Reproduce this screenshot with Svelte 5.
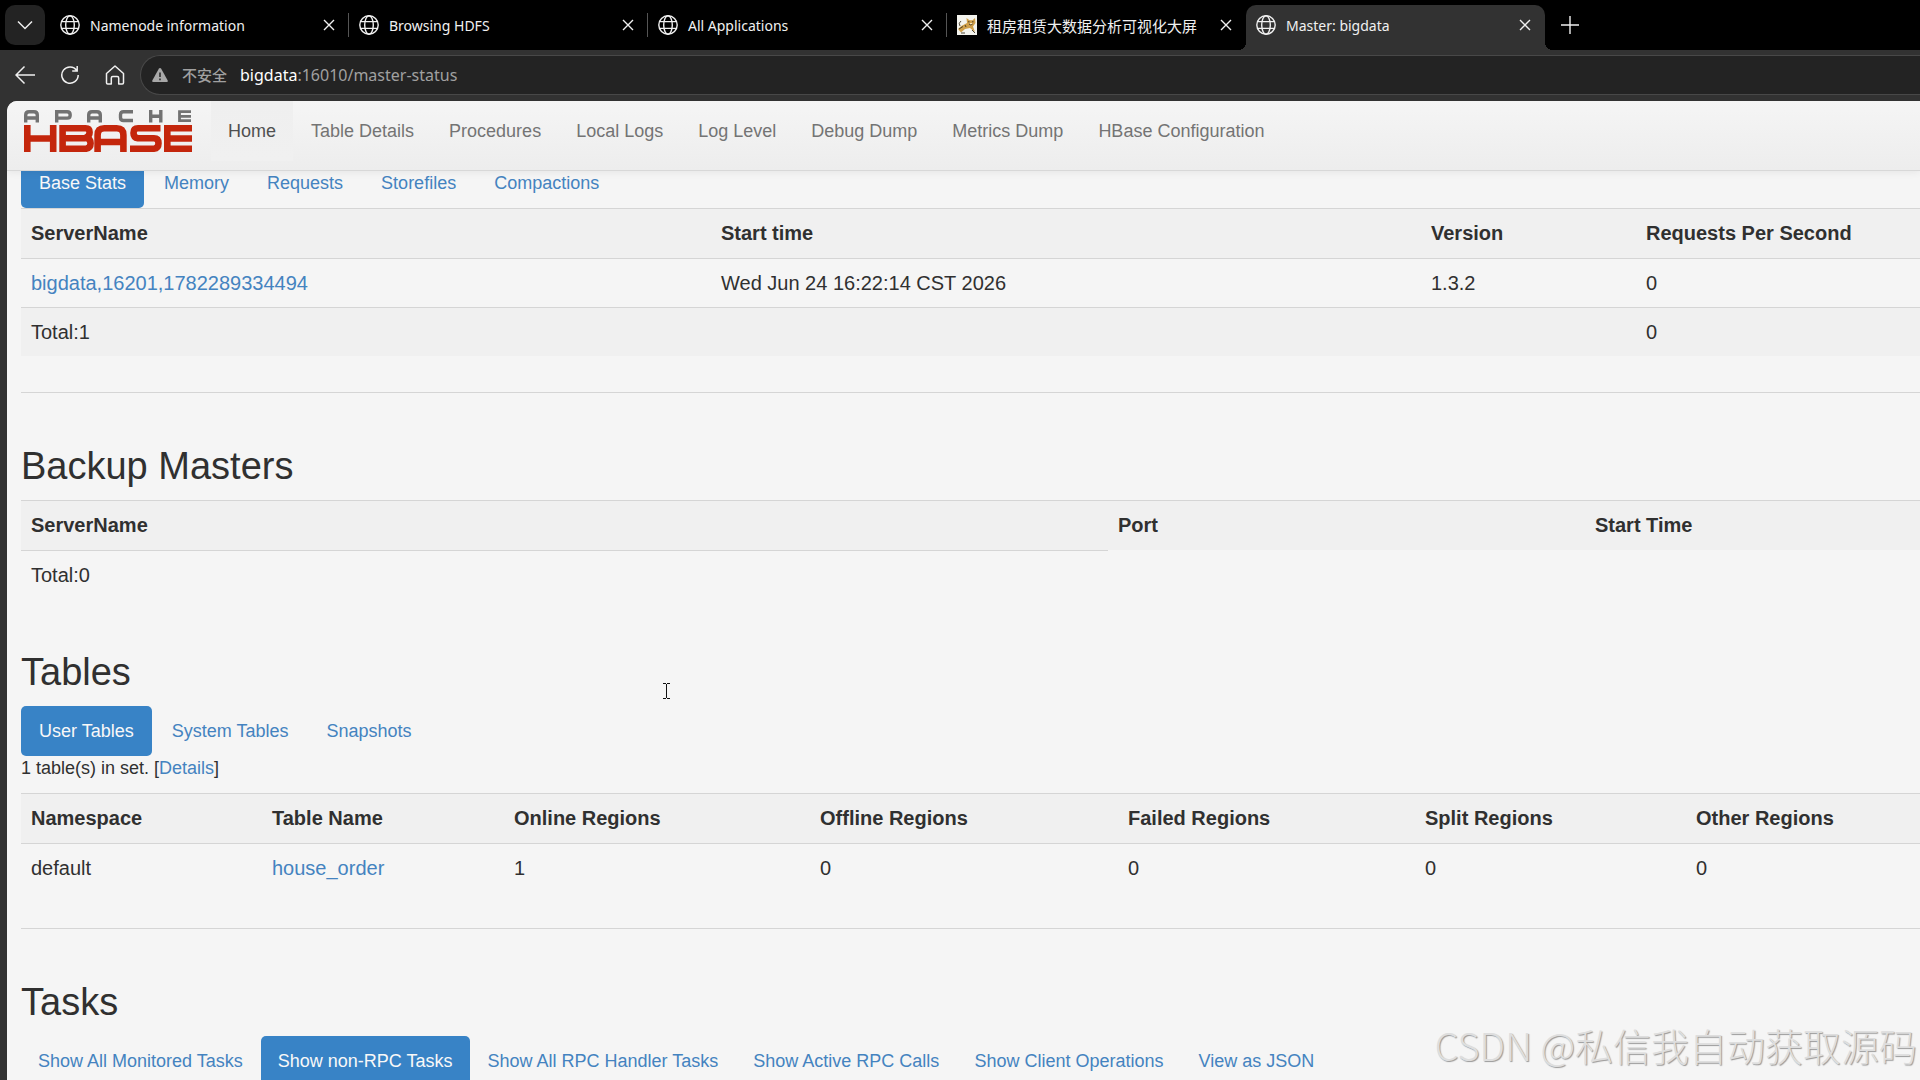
<script>
  const BROWSER_TABS = [
    { title: 'Namenode information', icon: 'globe' },
    { title: 'Browsing HDFS', icon: 'globe' },
    { title: 'All Applications', icon: 'globe' },
    { title: '租房租赁大数据分析可视化大屏', icon: 'tomcat', lang: 'zh' },
    { title: 'Master: bigdata', icon: 'globe' }
  ];
  let activeTab = $state(4);

  const NAV_LINKS = [
    'Home', 'Table Details', 'Procedures', 'Local Logs', 'Log Level',
    'Debug Dump', 'Metrics Dump', 'HBase Configuration'
  ];

  const STAT_TABS = ['Base Stats', 'Memory', 'Requests', 'Storefiles', 'Compactions'];
  const TABLE_TABS = ['User Tables', 'System Tables', 'Snapshots'];
  const TASK_TABS = [
    'Show All Monitored Tasks', 'Show non-RPC Tasks', 'Show All RPC Handler Tasks',
    'Show Active RPC Calls', 'Show Client Operations', 'View as JSON'
  ];

  // Relative column widths of the three tables
  const SERVER_COLS = [690, 710, 215, 284];
  const BACKUP_COLS = [1087, 477, 335];
  const TABLE_COLS = [241, 242, 306, 308, 297, 271, 234];

  const TABLE_HEADS = [
    'Namespace', 'Table Name', 'Online Regions', 'Offline Regions',
    'Failed Regions', 'Split Regions', 'Other Regions'
  ];

  let statTab = $state(0);
  let tableTab = $state(0);
  let taskTab = $state(1);
  const HOST = 'bigdata';
  const PATH = ':16010/master-status';

  function share(cols, i) {
    return (cols[i] / cols.reduce((a, b) => a + b, 0)) * 100;
  }
</script>

{#snippet cols(list)}
  <colgroup>
    {#each list as _, i}
      <col style:width="{share(list, i)}%" />
    {/each}
  </colgroup>
{/snippet}

{#snippet globe()}
  <svg class="favicon" viewBox="0 0 20 20" fill="none" stroke="currentColor" stroke-width="1.4" aria-hidden="true">
    <circle cx="10" cy="10" r="9.2" />
    <ellipse cx="10" cy="10" rx="4.3" ry="9.2" />
    <path d="M1.8 6.6h16.4M1.8 13.4h16.4" />
  </svg>
{/snippet}

<div class="window">
  <header class="tab-strip">
    <button class="tab-menu" aria-label="Tab actions">
      <svg viewBox="0 0 16 10" width="16" height="10" fill="none" stroke="currentColor" stroke-width="1.5"><path d="M1 1.5l7 7 7-7" /></svg>
    </button>
    {#each BROWSER_TABS as tab, i}
      <div class="browser-tab" class:active={i === activeTab} class:divided={i < activeTab - 1}>
        <button class="tab-label" onclick={() => (activeTab = i)}>
          {#if tab.icon === 'globe'}
            {@render globe()}
          {:else}
            <svg class="favicon" viewBox="0 0 20 20" aria-hidden="true">
              <path d="M0 0h20v20H0z" fill="#f4f4ee" />
              <path d="M1 14q4-4 9-6l-.5-5 3 2.200h3L18 3l.5 5-2.500 3.500 2 5.500-5-4-5 1-4 3.500z" fill="#d0a04a" />
              <path d="M3 11q-2-3 1-5M11 6.800h1.500M15 6.800h1.500M12 9l1.800 1 1.800-1M2 14l4-2.500M4 18h4M15 15l3 3M8 10l1 2" stroke="#3f3526" stroke-width=".9" fill="none" />
              <path d="M12.500 8h3l-1.500 1.500z" fill="#fff3d0" />
            </svg>
          {/if}
          <span lang={tab.lang}>{tab.title}</span>
        </button>
        <button class="tab-close" aria-label="Close {tab.title}">
          <svg viewBox="0 0 12 12" width="12" height="12" stroke="currentColor" stroke-width="1.4"><path d="M1 1l10 10M11 1L1 11" /></svg>
        </button>
      </div>
    {/each}
    <button class="new-tab" aria-label="New tab">
      <svg viewBox="0 0 18 18" width="18" height="18" stroke="currentColor" stroke-width="1.4"><path d="M9 0v18M0 9h18" /></svg>
    </button>
  </header>

  <div class="toolbar">
    <div class="tools">
      <button aria-label="Back">
        <svg viewBox="0 0 20 20" width="20" height="20" fill="none" stroke="currentColor" stroke-width="1.5"><path d="M20 10H1M9.500 1.500L1 10l8.500 8.500" /></svg>
      </button>
      <button aria-label="Refresh">
        <svg viewBox="0 0 20 20" width="20" height="20" fill="none" stroke="currentColor" stroke-width="1.5"><path d="M16.800 5.500A8.200 8.200 0 1 0 18.200 10M17.200 1v5h-5" /></svg>
      </button>
      <button aria-label="Home">
        <svg viewBox="0 0 20 20" width="20" height="20" fill="none" stroke="currentColor" stroke-width="1.5" stroke-linejoin="round"><path d="M1.500 8.500L10 1l8.500 7.500v9.300q0 1.200-1.200 1.200h-3.600v-6q0-1.500-1.500-1.500h-4.400q-1.500 0-1.500 1.500v6H2.700q-1.200 0-1.200-1.200z" /></svg>
      </button>
    </div>
    <div class="address">
      <svg viewBox="0 0 16 14" width="16" height="14" aria-hidden="true">
        <path d="M8 0q.8 0 1.200.7l6.500 11.800q.6 1.500-1 1.500H1.300q-1.600 0-1-1.500L6.800.7Q7.200 0 8 0z" fill="#a8a8a8" />
        <path d="M8 4.500v4.500M8 10.500v1.700" stroke="#232323" stroke-width="1.500" />
      </svg>
      <span class="insecure" lang="zh">不安全</span>
      <span class="url"><b>{HOST}</b>{PATH}</span>
    </div>
  </div>

  <div class="page">
    <nav class="navbar">
      <a class="brand" href="#top" aria-label="Apache HBase">
        <svg viewBox="0 0 168 42" width="168" height="42" fill="none">
          <g stroke="#727272" stroke-width="3.4">
            <path d="M1.700 12.500V5q0-3.300 3.300-3.300h5q3.300 0 3.300 3.300v7.500M1.700 8h11.600" />
            <path d="M32.700 12.500V1.700h10.500q3 0 3 3.200t-3 3.200H32.700" />
            <path d="M64.700 12.500V5q0-3.300 3.300-3.300h5q3.300 0 3.300 3.300v7.500M64.700 8h11.600" />
            <path d="M109 1.700H99.500q-3 0-3 3v2.800q0 3 3 3H109" />
            <path d="M126.700 0v12.500M136.800 0v12.500M126.700 6.300h10.100" />
            <path d="M167 1.700h-11.500v9h11.500M155.500 6.300h11.500" stroke-width="2.800" />
          </g>
          <g stroke="#c4260c" stroke-width="6.600">
            <path d="M3.300 15v27M29.200 15v27M3.300 28.500h26" />
            <path d="M38.600 18.300h23q4 0 4 4t-4 5.500q5 .8 5 5.500t-4.500 5.400H38.600zM38.600 28.300h23" />
            <path d="M73.600 42V25q0-6.700 6.700-6.700h12.400q6.700 0 6.700 6.700v17M73.600 32h26" />
            <path d="M136.500 18.300h-22.500q-4.500 0-4.500 4.600t4.500 5.400h16q4.500 0 4.500 5t-4.500 5.400h-24" />
            <path d="M168 18.300h-24.700v20.400H168M143 28.500h25" />
          </g>
        </svg>
      </a>
      <ul>
        {#each NAV_LINKS as link, i}
          <li><a href="#{link}" class:current={i === 0}>{link}</a></li>
        {/each}
      </ul>
    </nav>

    <main>
      <ul class="pills">
        {#each STAT_TABS as label, i}
          <li><a href="#{label}" class:selected={i === statTab} onclick={() => (statTab = i)}>{label}</a></li>
        {/each}
      </ul>
      <table>
        {@render cols(SERVER_COLS)}
        <tbody>
          <tr class="striped"><th>ServerName</th><th>Start time</th><th>Version</th><th>Requests Per Second</th></tr>
          <tr>
            <td><a href="#server">bigdata,16201,1782289334494</a></td>
            <td>Wed Jun 24 16:22:14 CST 2026</td>
            <td>1.3.2</td>
            <td>0</td>
          </tr>
          <tr class="striped"><td>Total:1</td><td></td><td></td><td>0</td></tr>
        </tbody>
      </table>
      <hr />

      <h2>Backup Masters</h2>
      <table>
        {@render cols(BACKUP_COLS)}
        <tbody>
          <tr class="striped"><th>ServerName</th><th>Port</th><th>Start Time</th></tr>
          <tr><td>Total:0</td></tr>
        </tbody>
      </table>

      <h2 class="after-table">Tables</h2>
      <ul class="pills">
        {#each TABLE_TABS as label, i}
          <li><a href="#{label}" class:selected={i === tableTab} onclick={() => (tableTab = i)}>{label}</a></li>
        {/each}
      </ul>
      <p>1 table(s) in set. [<a href="#details">Details</a>]</p>
      <table>
        {@render cols(TABLE_COLS)}
        <tbody>
          <tr class="striped">
            {#each TABLE_HEADS as head}
              <th>{head}</th>
            {/each}
          </tr>
          <tr>
            <td>default</td>
            <td><a href="#house_order">house_order</a></td>
            <td>1</td><td>0</td><td>0</td><td>0</td><td>0</td>
          </tr>
        </tbody>
      </table>
      <hr />

      <h2>Tasks</h2>
      <ul class="pills tight">
        {#each TASK_TABS as label, i}
          <li><a href="#{label}" class:selected={i === taskTab} onclick={() => (taskTab = i)}>{label}</a></li>
        {/each}
      </ul>
    </main>
  </div>

  <!-- mouse pointer and watermark lie over the page -->
  <svg class="pointer" viewBox="0 0 8 17" width="8" height="17" stroke="#111" fill="none" aria-hidden="true">
    <path d="M0 .5h3M4 .5h3M0 15.500h3M4 15.500h3M3.500 1v14" />
  </svg>
  <div class="watermark">CSDN @私信我自动获取源码</div>
</div>

<style>
  :global(body) {
    background: #323232;
  }

  .window {
    position: relative;
    display: flex;
    flex-direction: column;
    height: 100vh;
    overflow: hidden;
    background: #323232;
    font-family: "Liberation Sans", Arial, sans-serif;
    color: #303030;
  }

  button {
    display: flex;
    align-items: center;
    justify-content: center;
    padding: 0;
    border: 0;
    background: none;
    color: #f0f0f0;
    font: inherit;
  }

  a {
    color: #4483c0;
    text-decoration: none;
  }

  ul {
    display: flex;
    margin: 0;
    padding: 0;
    list-style: none;
  }

  /* ---------- tab strip ---------- */
  .tab-strip {
    flex: none;
    display: flex;
    height: 45px;
    padding: 5px 5px 0;
    background: #000;
    font-family: "Noto Sans", "Noto Sans CJK SC", sans-serif;
    font-size: 14px;
  }

  .tab-strip span:lang(zh) {
    font-size: 15px;
  }

  .tab-menu {
    width: 40px;
    height: 40px;
    border-radius: 10px;
    background: #232323;
  }

  .browser-tab {
    position: relative;
    display: flex;
    align-items: center;
    flex: 0 1 299px;
    min-width: 0;
    padding: 0 4px 5px 0;
    box-sizing: border-box;
  }

  .tab-menu + .browser-tab {
    margin-left: 5px;
  }

  .browser-tab.divided::after {
    content: '';
    position: absolute;
    right: 0;
    top: 8px;
    width: 1px;
    height: 24px;
    background: #555;
  }

  .browser-tab.active {
    border-radius: 10px 10px 0 0;
    background: #323232;
  }

  /* flared feet of the active tab */
  .browser-tab.active::before,
  .browser-tab.active::after {
    content: '';
    position: absolute;
    bottom: 0;
    width: 8px;
    height: 8px;
  }

  .browser-tab.active::before {
    right: 100%;
    background: radial-gradient(circle at 0 0, #000 8px, #323232 8px);
  }

  .browser-tab.active::after {
    left: 100%;
    background: radial-gradient(circle at 100% 0, #000 8px, #323232 8px);
  }

  .tab-label {
    flex: 1;
    min-width: 0;
    justify-content: flex-start;
    gap: 10px;
    padding-left: 10px;
    white-space: nowrap;
  }

  .favicon {
    flex: none;
    width: 20px;
    height: 20px;
  }

  .tab-close {
    width: 32px;
    height: 32px;
  }

  .new-tab {
    width: 50px;
    height: 40px;
  }

  /* ---------- toolbar ---------- */
  .toolbar {
    flex: none;
    display: flex;
    align-items: center;
    height: 49px;
    padding: 0 0 2px 2px;
  }

  .tools {
    display: flex;
  }

  .tools button {
    width: 45px;
    height: 40px;
  }

  .address {
    flex: 1;
    display: flex;
    align-items: center;
    height: 38px;
    margin-left: 3px;
    padding-left: 11px;
    border: 1px solid #484848;
    border-right: 0;
    border-radius: 20px 0 0 20px;
    background: #232323;
    color: #a0a0a0;
    font-family: "Noto Sans", "Noto Sans CJK SC", sans-serif;
  }

  .insecure {
    margin-left: 14px;
    font-size: 15px;
    font-weight: 500;
  }

  .url {
    margin-left: 13px;
    font-size: 16px;
  }

  .url b {
    color: #fff;
    font-weight: 400;
  }

  /* ---------- page ---------- */
  .page {
    flex: 1;
    min-height: 0;
    margin-left: 7px;
    border-radius: 10px 0 0 0;
    background: #f5f5f5;
    overflow: hidden;
  }

  .navbar {
    position: relative;
    z-index: 1;
    display: flex;
    height: 69px;
    padding-left: 17px;
    border-bottom: 1px solid #d8d8d8;
    background: linear-gradient(#f5f5f5, #ededed);
    box-shadow: 0 1px 8px rgba(0, 0, 0, 0.07);
    font-size: 18px;
  }

  .brand {
    padding: 9px 19px 0 0;
  }

  .navbar ul {
    gap: 1px;
  }

  .navbar li a {
    display: block;
    padding: 16px 17px;
    line-height: 28px;
    color: #747474;
  }

  .navbar li a.current {
    background: linear-gradient(#efefef, #f0f0f0);
    color: #505050;
  }

  main {
    margin-top: -13px;
    padding-left: 14px;
  }

  .pills {
    gap: 2px;
    font-size: 18px;
    line-height: 26px;
    white-space: nowrap;
  }

  .pills a {
    display: block;
    padding: 12px 18px;
    border-radius: 5px;
  }

  .pills.tight {
    gap: 1px;
  }

  .pills.tight a {
    padding: 12px 17px;
  }

  .pills a.selected {
    background: #3883c6;
    color: #f8f8f8;
  }

  table {
    width: 100%;
    table-layout: fixed;
    border-spacing: 0;
    font-size: 20px;
    line-height: 28px;
  }

  th,
  td {
    padding: 10px;
    border-top: 1px solid #d5d5d5;
    text-align: left;
  }

  th {
    line-height: 29px;
  }

  .striped {
    background: #f0f0f0;
  }

  hr {
    margin: 36px 0 53px;
    border: 0;
    border-top: 1px solid #d5d5d5;
  }

  h2 {
    margin: 0 0 13px;
    font-size: 38px;
    line-height: 41px;
    font-weight: 400;
  }

  .after-table {
    margin-top: 53px;
  }

  p {
    margin: 0 0 12px;
    font-size: 18px;
    line-height: 25px;
  }

  .pointer {
    position: absolute;
    left: 663px;
    top: 683px;
  }

  .watermark {
    position: absolute;
    right: 3px;
    bottom: 7px;
    font-family: "Noto Sans CJK SC", sans-serif;
    font-size: 38px;
    font-weight: 300;
    line-height: 56px;
    color: #dedede;
    text-shadow: 1px 1px 1px #999;
    white-space: nowrap;
    pointer-events: none;
  }
</style>
